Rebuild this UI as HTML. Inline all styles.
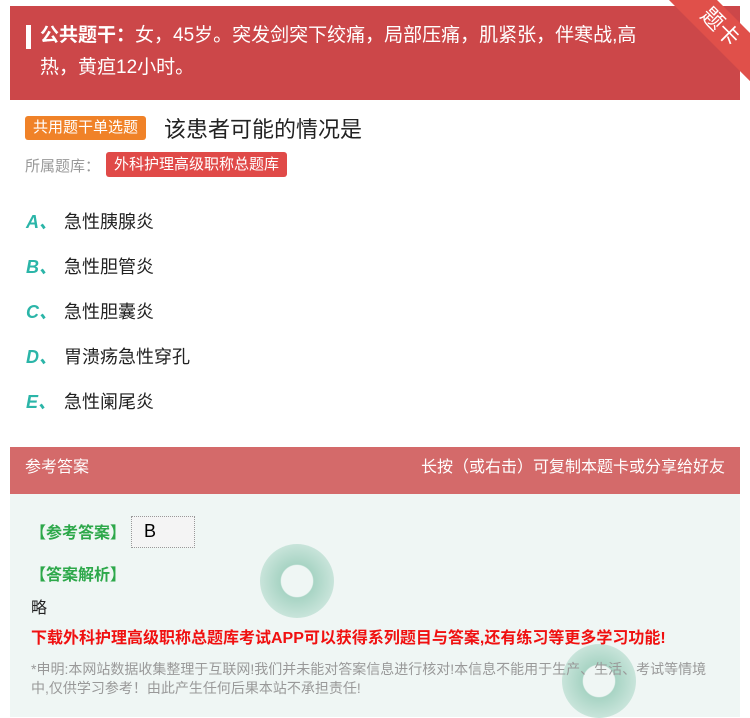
<!DOCTYPE html>
<html><head><meta charset="utf-8"><style>
body{margin:0;width:750px;height:717px;overflow:hidden;background:#fff;font-family:"Liberation Sans","Noto Sans CJK SC",sans-serif;position:relative}
.top{position:absolute;left:10px;top:6px;width:730px;height:94px;background:#cc4749;color:#fff;font-size:19px;line-height:32px}
.top .bar{position:absolute;left:16px;top:19px;width:5px;height:24px;background:#fff}
.top .t{position:absolute;left:30px;top:14px;width:615px}
.rib{position:absolute;width:120px;height:34px;background:#e0504a;color:#fff;transform:rotate(45deg);transform-origin:center;font-size:22px;text-align:center;line-height:34px;right:-30px;top:10px}
.tag{position:absolute;background:#f08228;color:#fff;font-size:15px;border-radius:3px;padding:0 8px;line-height:24px}
.q{position:absolute;left:164px;top:112px;font-size:22px;color:#222}
.lib{position:absolute;left:25px;top:155px;font-size:15px;color:#999}
.lb{position:absolute;left:106px;top:152px;background:#e04a48;color:#fff;font-size:15px;padding:0 8px;line-height:25px;border-radius:3px}
.opt{position:absolute;left:26px;font-size:18px;color:#222}
.opt b{color:#2bb5a8;font-style:italic;display:inline-block;width:38px;font-weight:bold}
.hd{position:absolute;left:10px;top:447px;width:730px;height:47px;background:#d46a6a;color:#fff;font-size:16px;line-height:42px}
.bd{position:absolute;left:10px;top:494px;width:730px;height:223px;background:#eff6f4}
.g{color:#2da84a;font-size:16px;position:absolute;left:30px;font-weight:bold}
</style></head><body>
<div class="top"><div class="bar"></div><div class="t"><b>公共题干：</b>女，45岁。突发剑突下绞痛，局部压痛，肌紧张，伴寒战,高<br>热，黄疸12小时。</div></div>
<div class="rib">题卡</div>
<div class="tag" style="left:25px;top:116px">共用题干单选题</div>
<div class="q">该患者可能的情况是</div>
<div class="lib">所属题库：</div><div class="lb">外科护理高级职称总题库</div>
<div class="opt" style="top:208px"><b>A、</b>急性胰腺炎</div>
<div class="opt" style="top:253px"><b>B、</b>急性胆管炎</div>
<div class="opt" style="top:298px"><b>C、</b>急性胆囊炎</div>
<div class="opt" style="top:343px"><b>D、</b>胃溃疡急性穿孔</div>
<div class="opt" style="top:388px"><b>E、</b>急性阑尾炎</div>
<div class="hd"><span style="position:absolute;left:15px">参考答案</span><span style="position:absolute;right:15px">长按（或右击）可复制本题卡或分享给好友</span></div>
<div class="bd">
<div style="position:absolute;left:250px;top:50px;width:74px;height:74px;border-radius:50%;background:radial-gradient(circle,#eff6f4 30%,#a8d4c4 32%,#c8e4da 70%)"></div>
<div style="position:absolute;left:552px;top:150px;width:74px;height:74px;border-radius:50%;background:radial-gradient(circle,#eff6f4 30%,#a8d4c4 32%,#c8e4da 70%)"></div>
</div>
<div class="g" style="top:519px;left:30px">【参考答案】</div>
<div style="position:absolute;left:131px;top:516px;width:64px;height:32px;background:#f4f4f4;border:1px dotted #999;box-sizing:border-box;font-size:18px;padding-left:12px;line-height:28px">B</div>
<div class="g" style="top:561px">【答案解析】</div>
<div style="position:absolute;left:31px;top:594px;font-size:16px;color:#222">略</div>
<div style="position:absolute;left:31px;top:624px;font-size:16px;color:#f01010;font-weight:bold">下载外科护理高级职称总题库考试APP可以获得系列题目与答案,还有练习等更多学习功能!</div>
<div style="position:absolute;left:31px;top:660px;width:690px;font-size:14px;color:#999;line-height:19px">*申明:本网站数据收集整理于互联网!我们并未能对答案信息进行核对!本信息不能用于生产、生活、考试等情境中,仅供学习参考！由此产生任何后果本站不承担责任!</div>
</body></html>
